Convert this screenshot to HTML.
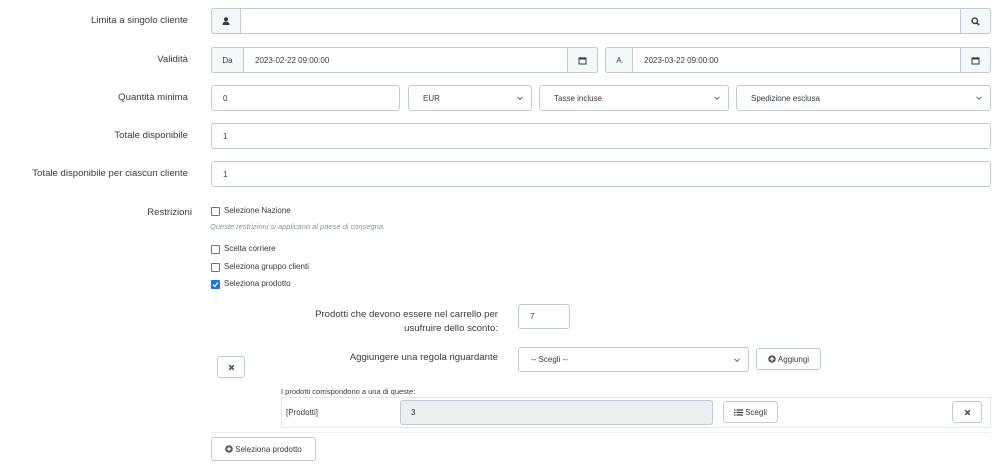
<!DOCTYPE html>
<html><head><meta charset="utf-8"><style>
*{box-sizing:border-box;margin:0;padding:0}
body{width:1000px;height:470px;background:#fff;font-family:"Liberation Sans",sans-serif;color:#363a41;position:relative;overflow:hidden}
.a{position:absolute}
.lbl{position:absolute;font-size:9.6px;color:#363a41;text-align:right;white-space:nowrap}
.box{position:absolute;border:1px solid #bbcdd2;border-radius:3px;background:#fff;font-size:8px;color:#363a41;display:flex;align-items:center;padding-left:11px}
.add{position:absolute;background:#f5f8f9;border:1px solid #bbcdd2;display:flex;align-items:center;justify-content:center;font-size:8px;color:#6c868e}
.sel::after{content:"";position:absolute;right:9px;top:50%;width:3px;height:3px;border-right:1.2px solid #666;border-bottom:1.2px solid #666;transform:translateY(-70%) rotate(45deg)}
.btn{position:absolute;border:1px solid #bbcdd2;border-radius:3px;background:#fff;font-size:8px;color:#6c868e;display:flex;align-items:center;justify-content:center;gap:2px}
.cb{position:absolute;width:9px;height:9px;border:1px solid #6c7a80;border-radius:1px;background:#fff}
.ct{position:absolute;font-size:8px;color:#363a41}
</style></head><body>

<div class="lbl" style="right:812px;top:15px">Limita a singolo cliente</div>
<div class="box" style="left:211px;top:8px;width:780px;height:26px"></div>
<div class="add" style="left:211px;top:8px;width:30px;height:26px;border-radius:3px 0 0 3px"><svg width="8" height="8" viewBox="0 0 8 8"><circle cx="4" cy="2.3" r="2" fill="#363a41"/><path d="M0.5 8 Q0.5 4.5 4 4.5 Q7.5 4.5 7.5 8Z" fill="#363a41"/></svg></div>
<div class="add" style="left:960px;top:8px;width:31px;height:26px;border-radius:0 3px 3px 0"><svg width="9" height="9" viewBox="0 0 9 9"><circle cx="3.8" cy="3.8" r="2.7" fill="none" stroke="#363a41" stroke-width="1.4"/><path d="M5.8 5.8L8 8" stroke="#363a41" stroke-width="1.6"/></svg></div>

<div class="lbl" style="right:812px;top:54px">Validità</div>
<div class="box" style="left:211px;top:47px;width:387px;height:26px;padding-left:43px">2023-02-22 09:00:00</div>
<div class="add" style="left:211px;top:47px;width:33px;height:26px;border-radius:3px 0 0 3px;color:#363a41">Da</div>
<div class="add" style="left:567px;top:47px;width:31px;height:26px;border-radius:0 3px 3px 0"><svg width="9" height="9" viewBox="0 0 9 9"><rect x="1" y="2" width="7" height="6" fill="none" stroke="#363a41"/><rect x="1" y="2" width="7" height="1.5" fill="#363a41"/><path d="M2.8 1v2M6.2 1v2" stroke="#363a41"/></svg></div>
<div class="box" style="left:605px;top:47px;width:386px;height:26px;padding-left:38px">2023-03-22 09:00:00</div>
<div class="add" style="left:605px;top:47px;width:28px;height:26px;border-radius:3px 0 0 3px;color:#363a41">A</div>
<div class="add" style="left:960px;top:47px;width:31px;height:26px;border-radius:0 3px 3px 0"><svg width="9" height="9" viewBox="0 0 9 9"><rect x="1" y="2" width="7" height="6" fill="none" stroke="#363a41"/><rect x="1" y="2" width="7" height="1.5" fill="#363a41"/><path d="M2.8 1v2M6.2 1v2" stroke="#363a41"/></svg></div>

<div class="lbl" style="right:812px;top:92px">Quantità minima</div>
<div class="box" style="left:211px;top:85px;width:189px;height:26px">0</div>
<div class="box sel" style="left:408px;top:85px;width:124px;height:26px;padding-left:14px">EUR</div>
<div class="box sel" style="left:539px;top:85px;width:190px;height:26px;padding-left:14px">Tasse incluse</div>
<div class="box sel" style="left:736px;top:85px;width:255px;height:26px;padding-left:14px">Spedizione esclusa</div>

<div class="lbl" style="right:812px;top:130px">Totale disponibile</div>
<div class="box" style="left:211px;top:123px;width:780px;height:26px">1</div>
<div class="lbl" style="right:812px;top:168px">Totale disponibile per ciascun cliente</div>
<div class="box" style="left:211px;top:161px;width:780px;height:26px">1</div>

<div class="lbl" style="right:808px;top:207px">Restrizioni</div>
<div class="cb" style="left:211px;top:207px"></div><div class="ct" style="left:224px;top:206px">Selezione Nazione</div>
<div class="ct" style="left:210px;top:222px;font-style:italic;color:#8a9599;font-size:7.5px">Queste restrizioni si applicano al paese di consegna.</div>
<div class="cb" style="left:211px;top:245px"></div><div class="ct" style="left:224px;top:244px">Scelta corriere</div>
<div class="cb" style="left:211px;top:263px"></div><div class="ct" style="left:224px;top:262px">Seleziona gruppo clienti</div>
<div class="cb" style="left:211px;top:280px;background:#1a73e8;border-color:#1a73e8"><svg width="7" height="7" viewBox="0 0 7 7" style="position:absolute;left:0;top:0"><path d="M1 3.6L2.8 5.4L6 1.5" fill="none" stroke="#fff" stroke-width="1.3"/></svg></div><div class="ct" style="left:224px;top:279px">Seleziona prodotto</div>

<div class="lbl" style="right:502px;top:308px;line-height:14px">Prodotti che devono essere nel carrello per<br>usufruire dello sconto:</div>
<div class="box" style="left:518px;top:304px;width:52px;height:25px">7</div>

<div class="btn" style="left:217px;top:356px;width:28px;height:22px;color:#555"><svg width="7" height="7" viewBox="0 0 7 7"><path d="M1.2 1.2L5.8 5.8M5.8 1.2L1.2 5.8" stroke="#555" stroke-width="1.6"/></svg></div>
<div class="lbl" style="right:502px;top:352px">Aggiungere una regola riguardante</div>
<div class="box sel" style="left:518px;top:347px;width:231px;height:25px;padding-left:12px">-- Scegli --</div>
<div class="btn" style="left:756px;top:348px;width:65px;height:22px;color:#363a41"><svg width="8" height="8" viewBox="0 0 8 8"><circle cx="4" cy="4" r="3.8" fill="#555"/><path d="M4 1.8v4.4M1.8 4h4.4" stroke="#fff" stroke-width="1.2"/></svg>Aggiungi</div>

<div class="ct" style="left:281px;top:387px;font-size:7.5px">I prodotti corrispondono a una di queste:</div>
<div class="a" style="left:281px;top:397px;width:710px;height:31px;border:1px solid #e3e8ea"></div>
<div class="a" style="left:210px;top:432px;width:781px;height:1px;background:#eef1f2"></div>
<div class="ct" style="left:286px;top:408px">[Prodotti]</div>
<div class="box" style="left:400px;top:400px;width:313px;height:25px;background:#eceeef;padding-left:10px">3</div>
<div class="btn" style="left:723px;top:401px;width:55px;height:22px;color:#363a41"><svg width="9" height="7" viewBox="0 0 9 7"><path d="M0 1h1.5M0 3.5h1.5M0 6h1.5M2.5 1H9M2.5 3.5H9M2.5 6H9" stroke="#363a41" stroke-width="1.2"/></svg>Scegli</div>
<div class="btn" style="left:952px;top:401px;width:30px;height:22px"><svg width="7" height="7" viewBox="0 0 7 7"><path d="M1.2 1.2L5.8 5.8M5.8 1.2L1.2 5.8" stroke="#555" stroke-width="1.6"/></svg></div>

<div class="btn" style="left:211px;top:437px;width:105px;height:24px;color:#363a41"><svg width="8" height="8" viewBox="0 0 8 8"><circle cx="4" cy="4" r="3.8" fill="#555"/><path d="M4 1.8v4.4M1.8 4h4.4" stroke="#fff" stroke-width="1.2"/></svg>Seleziona prodotto</div>
</body></html>
